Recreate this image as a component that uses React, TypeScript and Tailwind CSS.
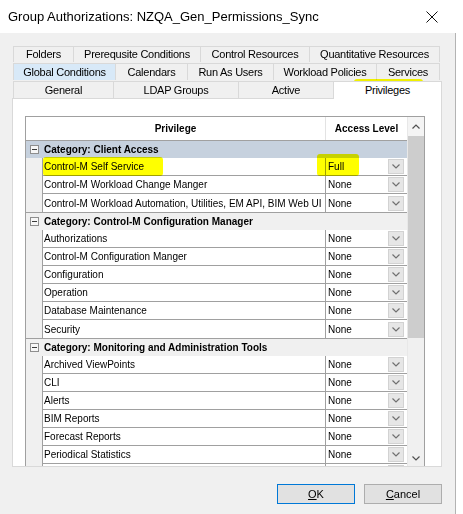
import React from "react";

type Row =
  | { kind: "cat"; label: string; selected?: boolean; first?: boolean }
  | { kind: "item"; label: string; value: string; last?: boolean };

const rows: Row[] = [
  { kind: "cat", label: "Category: Client Access", selected: true, first: true },
  { kind: "item", label: "Control-M Self Service", value: "Full" },
  { kind: "item", label: "Control-M Workload Change Manger", value: "None" },
  { kind: "item", label: "Control-M Workload Automation, Utilities, EM API, BIM Web UI", value: "None", last: true },
  { kind: "cat", label: "Category: Control-M Configuration Manager" },
  { kind: "item", label: "Authorizations", value: "None" },
  { kind: "item", label: "Control-M Configuration Manger", value: "None" },
  { kind: "item", label: "Configuration", value: "None" },
  { kind: "item", label: "Operation", value: "None" },
  { kind: "item", label: "Database Maintenance", value: "None" },
  { kind: "item", label: "Security", value: "None", last: true },
  { kind: "cat", label: "Category: Monitoring and Administration Tools" },
  { kind: "item", label: "Archived ViewPoints", value: "None" },
  { kind: "item", label: "CLI", value: "None" },
  { kind: "item", label: "Alerts", value: "None" },
  { kind: "item", label: "BIM Reports", value: "None" },
  { kind: "item", label: "Forecast Reports", value: "None" },
  { kind: "item", label: "Periodical Statistics", value: "None" },
  { kind: "item", label: "", value: "" },
];

const tabRows = [
  [
    { label: "Folders", w: "w-[60px]" },
    { label: "Prerequsite Conditions", w: "w-[127px]" },
    { label: "Control Resources", w: "w-[109px]" },
    { label: "Quantitative Resources", w: "w-[131px]" },
  ],
  [
    { label: "Global Conditions", w: "w-[102px]", hot: true },
    { label: "Calendars", w: "w-[72px]" },
    { label: "Run As Users", w: "w-[86px]" },
    { label: "Workload Policies", w: "w-[103px]" },
    { label: "Services", w: "w-[64px]" },
  ],
  [
    { label: "General", w: "w-[100px]" },
    { label: "LDAP Groups", w: "w-[125px]" },
    { label: "Active", w: "w-[95px]" },
    { label: "Privileges", w: "w-[109px]", active: true },
  ],
];

const uiFont = { fontFamily: '"Liberation Sans", Arial, sans-serif' };
const gridFont = { fontFamily: '"Liberation Sans", Arial, sans-serif' };

const Chevron = ({ up = false, color = "#606060" }: { up?: boolean; color?: string }) => (
  <svg width="8" height="5" viewBox="0 0 8 5">
    <polyline
      points={up ? "0.5,4.5 4,1 7.5,4.5" : "0.5,0.5 4,4 7.5,0.5"}
      fill="none"
      stroke={color}
      strokeWidth="1.2"
    />
  </svg>
);

const CategoryRow = ({ label, selected, first }: { label: string; selected?: boolean; first?: boolean }) => (
  <div
    className={`flex shrink-0 items-center ${first ? "h-[17px]" : "h-[18px] border-t border-[#a0a0a0]"} ${
      selected ? "bg-[#c6d1de]" : "bg-[#f0f0f0]"
    }`}
  >
    <span className="ml-[4px] flex h-[9px] w-[9px] items-center justify-center border border-[#8e8e8e] bg-[#f6f6f6]">
      <span className="h-px w-[5px] bg-[#3a3a3a]" />
    </span>
    <span className="ml-[5px] text-[10px] font-bold text-black">{label}</span>
  </div>
);

const ItemRow = ({ label, value, last }: { label: string; value: string; last?: boolean }) => (
  <div className="flex h-[18px] shrink-0">
    <div className="w-[16px] bg-[#f0f0f0]" />
    <div className={`flex flex-1 border-l border-[#a0a0a0] bg-white ${last ? "" : "border-b"}`}>
      <div className="flex w-[283px] items-center overflow-hidden whitespace-nowrap border-r border-[#a0a0a0] pl-[1px] text-[10px] text-black">
        {label}
      </div>
      <div className="flex flex-1 items-center pl-[2px] pr-[3px] text-[10px] text-black">
        <span className="flex-1">{value}</span>
        <span className="flex h-[15px] w-[16px] items-center justify-center border border-[#d2d2d2] bg-[#e6e6e6]">
          <Chevron color="#707070" />
        </span>
      </div>
    </div>
  </div>
);

export default function App() {
  return (
    <div className="relative h-[514px] w-[463px] overflow-hidden bg-white" style={uiFont}>
      {/* Title bar */}
      <div className="flex h-[33px] items-center justify-between pl-[8px] pr-[25px]">
        <span className="text-[13px] text-black">Group Authorizations: NZQA_Gen_Permissions_Sync</span>
        <svg width="12" height="12" viewBox="0 0 12 12">
          <path d="M0.5 0.5 L11.5 11.5 M11.5 0.5 L0.5 11.5" stroke="#111" strokeWidth="1" />
        </svg>
      </div>

      <div className="flex h-[481px]">
        <div className="flex w-[456px] flex-col border-r border-[#b3b3b3] bg-[#f0f0f0] pl-[12px] pr-[13px] pt-[13px]">
          {/* Tabs */}
          <div className="ml-[1px] flex flex-col gap-[1px]">
            {tabRows.map((row, ri) => (
              <div key={ri} className={`flex ${ri === 0 ? "h-[16px]" : "h-[17px]"}`}>
                {row.map((t, ti) => (
                  <div
                    key={t.label}
                    className={`${t.w} flex items-center justify-center whitespace-nowrap border-l border-t border-[#d9d9d9] text-[11px] tracking-[-0.25px] text-black ${
                      ti === row.length - 1 ? "border-r" : ""
                    } ${
                      "active" in t && t.active
                        ? "relative z-10 h-[18px] bg-white"
                        : "hot" in t && t.hot
                        ? "h-full bg-[#d8e9f8]"
                        : "h-full bg-[#f0f0f0]"
                    }`}
                  >
                    {t.label}
                  </div>
                ))}
              </div>
            ))}
          </div>

          {/* Tab panel */}
          <div className="h-[369px] w-[430px] overflow-hidden border border-[#d9d9d9] bg-white pl-[12px] pt-[17px]" style={gridFont}>
            <div className="flex h-[358px] w-[400px] border border-[#a0a0a0]">
              <div className="flex w-[381px] flex-col overflow-hidden">
                <div className="flex h-[24px] shrink-0 border-b border-[#a0a0a0] bg-white text-[10px] font-bold text-black">
                  <div className="flex w-[300px] items-center justify-center border-r border-[#e3e3e3]">Privilege</div>
                  <div className="flex flex-1 items-center justify-center">Access Level</div>
                </div>
                {rows.map((r, i) =>
                  r.kind === "cat" ? (
                    <CategoryRow key={i} label={r.label} selected={r.selected} first={r.first} />
                  ) : (
                    <ItemRow key={i} label={r.label} value={r.value} last={r.last} />
                  )
                )}
              </div>
              {/* Scrollbar */}
              <div className="flex w-[17px] flex-col border-l border-[#e8e8e8] bg-[#f0f0f0]">
                <div className="flex h-[19px] items-center justify-center bg-[#f4f4f4]">
                  <Chevron up color="#505050" />
                </div>
                <div className="h-[202px] bg-[#cdcdcd]" />
                <div className="flex-1" />
                <div className="mb-[6px] flex h-[17px] items-center justify-center">
                  <Chevron color="#505050" />
                </div>
              </div>
            </div>
          </div>

          {/* Buttons */}
          <div className="mt-[17px] flex justify-end gap-[9px]">
            <button className="flex h-[20px] w-[78px] items-center justify-center border border-[#0078d7] bg-[#e1e1e1] text-[11px] text-black">
              <span className="underline">O</span>K
            </button>
            <button className="flex h-[20px] w-[78px] items-center justify-center border border-[#adadad] bg-[#e1e1e1] text-[11px] text-black">
              <span className="underline">C</span>ancel
            </button>
          </div>
        </div>
      </div>

      {/* Marker highlights */}
      <div className="pointer-events-none absolute left-[354px] top-[79px] h-[20px] w-[69px] rounded-[3px] bg-[#ffff00] mix-blend-multiply" />
      <div className="pointer-events-none absolute left-[43px] top-[157px] h-[19px] w-[120px] rounded-[3px] bg-[#ffff00] mix-blend-multiply" />
      <div className="pointer-events-none absolute left-[317px] top-[154px] h-[22px] w-[42px] rounded-[3px] bg-[#ffff00] mix-blend-multiply" />
    </div>
  );
}
